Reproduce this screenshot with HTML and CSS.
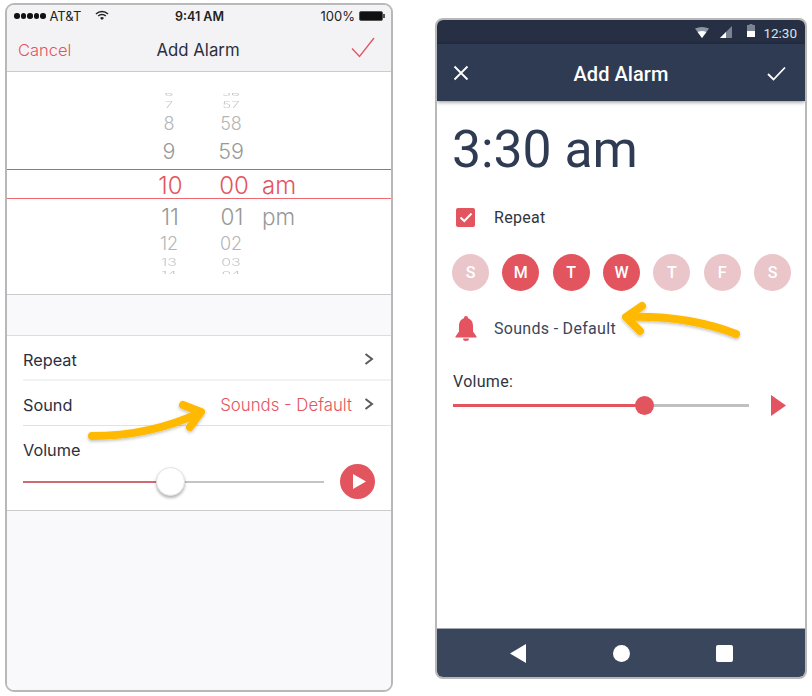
FILE: index.html
```html
<!DOCTYPE html>
<html lang="en">
<head>
<meta charset="utf-8">
<title>Add Alarm</title>
<link rel="stylesheet" href="styles.css">
</head>
<body>
<div class="stage">
  <section class="ios">
    <div class="ios-status">
      <div class="ios-status-left">
        <span class="dots"><i></i><i></i><i></i><i></i><i></i></span>
        <span>AT&amp;T</span>
        <svg class="ios-wifi" width="14" height="11" viewBox="0 0 14 11"><path d="M1 4 A8.5 8.5 0 0 1 13 4" fill="none" stroke="#222" stroke-width="1.5"/><path d="M3.2 6 A5.4 5.4 0 0 1 10.8 6" fill="none" stroke="#222" stroke-width="1.5"/><path d="M5 7.9 A3 3 0 0 1 9 7.9 L7 10 Z" fill="#222"/></svg>
      </div>
      <div class="ios-clock">9:41 AM</div>
      <div class="ios-status-right">
        <span>100%</span>
        <span class="ios-batt"></span>
      </div>
    </div>
    <header class="ios-nav">
      <span class="ios-cancel">Cancel</span>
      <span class="ios-title">Add Alarm</span>
      <svg class="ios-done" width="24" height="21" viewBox="0 0 24 21"><path d="M1 11.5 L8.5 19.5 L23 1" fill="none" stroke="#e45460" stroke-width="1.3"/></svg>
    </header>
    <div class="picker">
      <div class="wheel">
        <div class="wrow r6"><span>6</span><span>56</span><span></span></div>
        <div class="wrow r7"><span>7</span><span>57</span><span></span></div>
        <div class="wrow r8"><span>8</span><span>58</span><span></span></div>
        <div class="wrow r9"><span>9</span><span>59</span><span></span></div>
        <div class="wrow r10"><span>10</span><span>00</span><span>am</span></div>
        <div class="wrow r11"><span>11</span><span>01</span><span>pm</span></div>
        <div class="wrow r12"><span>12</span><span>02</span><span></span></div>
        <div class="wrow r13"><span>13</span><span>03</span><span></span></div>
        <div class="wrow r14"><span>14</span><span>04</span><span></span></div>
      </div>
    </div>
    <div class="ios-gap"></div>
    <div class="ios-list">
      <div class="ios-row ios-row-a">
        <span>Repeat</span>
        <svg class="chev" width="10" height="12" viewBox="0 0 10 12"><path d="M1.5 1 L8 6 L1.5 11" fill="none" stroke="#5b5b5f" stroke-width="2"/></svg>
      </div>
      <div class="ios-row ios-row-b">
        <span>Sound</span>
        <span class="ios-value">Sounds - Default</span>
        <svg class="chev" width="10" height="12" viewBox="0 0 10 12"><path d="M1.5 1 L8 6 L1.5 11" fill="none" stroke="#5b5b5f" stroke-width="2"/></svg>
      </div>
      <div class="ios-vol">
        <div class="ios-vol-label">Volume</div>
        <div class="ios-vol-line">
          <div class="ios-track"><div class="ios-fill"></div><div class="ios-thumb"></div></div>
          <div class="ios-play"><svg width="16" height="17" viewBox="0 0 16 17"><path d="M2 1 L15 8.5 L2 16 Z" fill="#fff"/></svg></div>
        </div>
      </div>
    </div>
    <div class="ios-rest"></div>
  </section>

  <section class="droid">
    <div class="droid-status">
      <svg width="14" height="11" viewBox="0 0 14 11"><path d="M0 1.5 Q7 -1.5 14 1.5 L7 11 Z" fill="#8e95a3"/><path d="M2.6 5 Q7 2.8 11.4 5 L7 11 Z" fill="#fff"/></svg>
      <svg class="d-signal" width="12" height="12" viewBox="0 0 12 12"><path d="M0 12 L12 0 V12 Z" fill="#7b8392"/><path d="M0 12 L6 6 V12 Z" fill="#fff"/></svg>
      <svg class="d-batt" width="8" height="13" viewBox="0 0 8 13"><path d="M2.5 0 H5.5 V1 H8 V13 H0 V1 H2.5 Z" fill="#7b8392"/><rect y="7" width="8" height="6" fill="#fff"/></svg>
      <span class="d-time">12:30</span>
    </div>
    <header class="droid-bar">
      <svg width="16" height="16" viewBox="0 0 16 16"><path d="M1.5 1.5 L14.5 14.5 M14.5 1.5 L1.5 14.5" stroke="#fff" stroke-width="1.8" fill="none"/></svg>
      <span class="droid-title">Add Alarm</span>
      <svg width="19" height="15" viewBox="0 0 19 15"><path d="M1 8 L6.5 13.5 L18 1.5" stroke="#fff" stroke-width="1.8" fill="none"/></svg>
    </header>
    <main class="droid-body">
      <div class="d-big">3:30 am</div>
      <div class="d-line d-repeat">
        <span class="d-box"><svg width="14" height="11" viewBox="0 0 14 11"><path d="M1.5 5.5 L5.3 9 L12.5 1.5" stroke="#fff" stroke-width="2" fill="none"/></svg></span>
        <span>Repeat</span>
      </div>
      <div class="days">
        <span class="day">S</span>
        <span class="day on">M</span>
        <span class="day on">T</span>
        <span class="day on">W</span>
        <span class="day">T</span>
        <span class="day">F</span>
        <span class="day">S</span>
      </div>
      <div class="d-line d-sound">
        <svg class="bell" width="22" height="25" viewBox="0 0 22 25"><path d="M11 0 C12.3 0 13 .9 13 2.2 C16.6 3.2 18 6.4 18 10 V15.5 L21.5 20.5 V21.5 H.5 V20.5 L4 15.5 V10 C4 6.4 5.4 3.2 9 2.2 C9 .9 9.700 0 11 0 Z" fill="#e45460"/><path d="M8 22.500 H14 A3 2.500 0 0 1 8 22.500 Z" fill="#e45460"/></svg>
        <span>Sounds - Default</span>
      </div>
      <div class="d-vol-label">Volume:</div>
      <div class="d-vol-line">
        <div class="d-track"><div class="d-fill"></div><div class="d-thumb"></div></div>
        <svg width="15" height="21" viewBox="0 0 15 21"><path d="M0 0 L15 10.500 L0 21 Z" fill="#e45460"/></svg>
      </div>
    </main>
    <nav class="droid-nav">
      <svg width="16" height="19" viewBox="0 0 16 19"><path d="M16 0 V19 L0 9.500 Z" fill="#fff"/></svg>
      <span class="nav-dot"></span>
      <span class="nav-sq"></span>
    </nav>
  </section>
</div>

<svg class="arrows" width="812" height="696" viewBox="0 0 812 696">
  <defs><filter id="sh" x="-20%" y="-40%" width="140%" height="180%"><feDropShadow dx="0" dy="1.500" stdDeviation="1.500" flood-color="#000" flood-opacity=".25"/></filter></defs>
  <g fill="none" stroke="#ffb900" stroke-width="8" stroke-linecap="round" stroke-linejoin="round" filter="url(#sh)">
    <path d="M92 436 C130 436 165 429 199 413"/>
    <path d="M183 405 L201 412 L190 427"/>
    <path d="M736 334 C702 321 665 316 628 317"/>
    <path d="M642 306 L626 317 L640 331"/>
  </g>
</svg>
</body>
</html>
```

FILE: styles.css
```css
* { box-sizing: border-box; }
html, body { margin: 0; padding: 0; background: #fff; }
body { width: 812px; height: 696px; overflow: hidden; position: relative; }
.stage { display: flex; align-items: flex-start; padding: 3px 0 0 5px; }

/* iOS */
.ios {
  width: 388px; height: 689px;
  border: 2px solid #b8b8b8; border-radius: 9px;
  overflow: hidden; display: flex; flex-direction: column;
  font-family: Inter, "Liberation Sans", sans-serif;
  background: #f9f9fb; color: #2b3040;
}
.ios-status {
  height: 21px; background: #f3f3f5; flex: none;
  display: grid; grid-template-columns: 1fr auto 1fr; align-items: center;
  padding: 1px 6px 0 7px; font-size: 13px; color: #222;
}
.ios-status-left { display: flex; align-items: center; gap: 4px; }
.dots { display: flex; gap: 1px; }
.dots i { width: 5.5px; height: 5.500px; border-radius: 50%; background: #111; }
.ios-wifi { margin-left: 10px; margin-top: -2px; }
.ios-clock { font-weight: 600; font-size: 12.500px; }
.ios-status-right { display: flex; justify-content: flex-end; align-items: center; gap: 4px; }
.ios-batt { width: 24px; height: 10px; background: #111; border: 1px solid #555; border-radius: 2px; position: relative; margin-right: 2px; }
.ios-batt::after { content: ""; position: absolute; right: -3px; top: 2px; width: 2px; height: 4px; background: #555; }
.ios-nav {
  height: 46px; flex: none; background: #f3f3f5; border-bottom: 1px solid #cbcbcd;
  display: grid; grid-template-columns: 1fr auto 1fr; align-items: center;
  padding: 2px 16px 0 11px; font-size: 16.500px;
}
.ios-cancel { color: #e45460; font-weight: 300; }
.ios-title { color: #2b3040; font-weight: 400; font-size: 16.800px; margin-left: 3px; }
.ios-done { justify-self: end; margin-top: -5px; }
.picker {
  height: 223px; flex: none; background: #fff; border-bottom: 1px solid #cbcbcd;
  padding-top: 21px;
}
.wheel { height: 181px; overflow: hidden; display: flex; flex-direction: column; }
.wrow {
  flex: none; display: grid; grid-template-columns: 62px 62px auto; grid-template-rows: minmax(0, 1fr);
  padding-left: 131px; justify-content: start;
  font-weight: 300; align-items: center;
}
.wrow span { display: block; text-align: center; line-height: 1; }
.wrow span:nth-child(3) { text-align: left; }
.r6 { height: 4px; font-size: 15px; color: #c4c4c4; align-items: end; }
.r6 span { transform: scaleY(.45); transform-origin: bottom; }
.r7 { height: 15px; font-size: 15px; color: #c8c8c8; }
.r7 span { transform: scaleY(.62); }
.r8 { height: 23px; font-size: 18px; color: #b5b5b5; }
.r9 { height: 34px; font-size: 21.500px; color: #999; }
.r10 {
  height: 30px; font-size: 24px; color: #e45460; padding-top: 3px;
  border-top: 1px solid #e45460; border-bottom: 1px solid #f0686f;
}
.r10 span:nth-child(1) { padding-left: 3px; }
.r10 span:nth-child(2) { padding-left: 6px; }
.r11 { height: 34px; font-size: 22.500px; color: #999; padding-top: 2px; }
.r11 span:nth-child(1), .r11 span:nth-child(2) { padding-left: 2px; }
.r12 { height: 21px; font-size: 18px; color: #b5b5b5; }
.r13 { height: 16px; font-size: 16px; color: #c8c8c8; }
.r13 span { transform: scaleY(.65); }
.r14 { height: 4px; font-size: 15px; color: #c4c4c4; align-items: start; }
.r14 span { transform: scaleY(.45); transform-origin: top; }
.ios-gap { height: 41px; flex: none; background: #f9f9fb; border-bottom: 1px solid #dcdcde; }
.ios-list { background: #fff; flex: none; font-size: 16.300px; font-weight: 400; border-bottom: 1px solid #cbcbcd; }
.ios-row {
  height: 45px; margin-left: 16px; padding: 2px 17px 0 0;
  display: flex; align-items: center;
}
.ios-row-a { border-bottom: 2px solid #f2f2f3; }
.ios-row-b { border-bottom: 1px solid #e2e2e4; }
.ios-row span:first-child { flex: 1; padding-top: 2px; }
.ios-value { color: #e45460; margin-right: 12px; font-weight: 300; font-size: 16.800px; padding-top: 2px; }
.ios-vol { height: 84px; padding: 15px 16px 0; }
.ios-vol-label { line-height: 19px; }
.ios-vol-line { display: flex; align-items: center; margin-top: 4px; }
.ios-track { width: 301px; height: 2px; background: #c4c4c4; position: relative; }
.ios-fill { width: 135px; height: 2px; background: #cf6a70; }
.ios-thumb {
  position: absolute; left: 133px; top: -14px; width: 29px; height: 29px; border-radius: 50%;
  background: #fff; border: 1px solid #e2e2e2; box-shadow: 0 2px 3px rgba(0,0,0,.3);
}
.ios-play {
  margin-left: 16px; width: 35px; height: 35px; border-radius: 50%; background: #e2545e;
  display: flex; align-items: center; justify-content: center; padding-left: 3px;
}
.ios-rest { flex: 1; background: #f9f9fb; }

/* Android */
.droid {
  width: 372px; height: 661px; margin: 15px 0 0 42px;
  border: 2px solid #b8b8b8; border-radius: 8px; overflow: hidden;
  display: flex; flex-direction: column; background: #fff;
  font-family: Roboto, "Liberation Sans", sans-serif;
}
.droid-status {
  height: 24px; flex: none; background: #262f43; color: #dfe1e6;
  display: flex; align-items: center; justify-content: flex-end; padding: 0 8px 0 0;
}
.d-signal { margin-left: 11px; }
.d-batt { margin-left: 15px; margin-top: -3px; }
.d-time { font-size: 13.500px; margin-left: 8px; margin-top: 1px; }
.droid-bar {
  height: 57px; flex: none; background: #2e3b53; color: #fff; position: relative; z-index: 1;
  display: flex; align-items: center; justify-content: space-between;
  padding: 0 19px 0 16px; box-shadow: 0 1px 4px rgba(0,0,0,.45);
}
.droid-bar svg { margin-top: 1px; }
.droid-title { font-size: 20px; font-weight: 500; margin-top: 3px; margin-left: 6px; letter-spacing: .05px; }
.droid-body { flex: 1; padding: 0 0 0 16px; color: #333; font-size: 16px; }
.d-big { font-size: 51.700px; color: #2e3b53; line-height: 61px; margin-top: 18px; margin-left: -1px; }
.d-line { display: flex; align-items: center; }
.d-repeat { margin-top: 26px; height: 22px; color: #303540; letter-spacing: .3px; }
.d-box {
  width: 19px; height: 19px; margin: 0 19px 0 3px; background: #e2545e; border-radius: 2px;
  display: flex; align-items: center; justify-content: center;
}
.days { display: flex; gap: 13.330px; margin-top: 26px; margin-left: -1px; }
.day {
  width: 37px; height: 37px; border-radius: 50%; flex: none; background: #eac6ca; color: #fff;
  display: flex; align-items: center; justify-content: center; font-size: 16px; font-weight: 500;
}
.day.on { background: #e2545e; }
.d-sound { margin-top: 23px; height: 28px; color: #3a465c; letter-spacing: .3px; }
.bell { margin: 0 17px 0 2px; }
.d-vol-label { margin-top: 30px; line-height: 19px; color: #303540; letter-spacing: .3px; }
.d-vol-line { display: flex; align-items: center; margin-top: 4px; }
.d-track { width: 296px; height: 3px; background: #c0c0c0; position: relative; }
.d-fill { width: 191px; height: 3px; background: #e2545e; }
.d-thumb {
  position: absolute; left: 182px; top: -8px; width: 19px; height: 19px; border-radius: 50%; background: #e2545e;
}
.d-vol-line svg { margin-left: 22px; }
.droid-nav {
  height: 49px; flex: none; background: #3a465c; border-top: 1px solid #a5a9b2;
  display: flex; align-items: center; justify-content: space-between; padding: 0 72px 0 73px;
}
.nav-dot { width: 17px; height: 17px; border-radius: 50%; background: #fff; }
.nav-sq { width: 17px; height: 17px; border-radius: 2px; background: #fff; }

.arrows { position: absolute; left: 0; top: 0; pointer-events: none; }
```
